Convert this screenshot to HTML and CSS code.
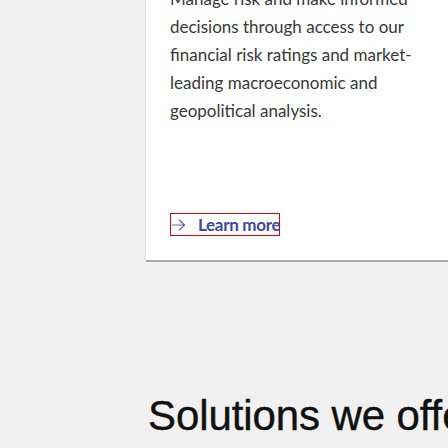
FILE: index.html
```html
<!DOCTYPE html>
<html>
<head>
<meta charset="utf-8">
<link rel="stylesheet" href="styles.css">
</head>
<body>
<div class="page">
  <div class="card">
    <p class="desc">Manage risk and make informed decisions through access to our financial risk ratings and market-leading macroeconomic and geopolitical analysis.</p>
    <a class="learn" href="#">
      <svg class="arrow" width="14" height="12" viewBox="0 0 14 12"><path d="M0 6H12.5M7 0.8L12.5 6L7 11.2" fill="none" stroke="#5a68b8" stroke-width="1.2"/></svg>
      <span class="label">Learn more</span>
    </a>
  </div>
  <h2 class="title">Solutions we offer</h2>
</div>
</body>
</html>
```
FILE: styles.css
```css
html, body {
  margin: 0;
  padding: 0;
  background: #f1f1f1;
  overflow: hidden;
}
.page {
  width: 448px;
  height: 448px;
  overflow: hidden;
}
.card {
  margin: -15px 0 0 146px;
  width: 360px;
  background: #fff;
  padding: 0 0 24px 24px;
  box-shadow: 0 2px 0 #a9a9a9, -1px 0 0 #e2e2e2;
  box-sizing: border-box;
}
.desc {
  margin: 0;
  width: 250px;
  font-family: Lato, "Noto Sans", sans-serif;
  font-size: 17px;
  line-height: 28px;
  color: #383838;
}
.learn {
  display: flex;
  align-items: center;
  margin-top: 88px;
  width: 108px;
  height: 21px;
  border: 1px solid #e3000f;
  text-decoration: none;
  overflow: visible;
  white-space: nowrap;
}
.arrow {
  margin-left: 1px;
  flex: none;
}
.label {
  margin-left: 12px;
  font-family: Lato, "Noto Sans", sans-serif;
  font-weight: 700;
  font-size: 17px;
  letter-spacing: -0.3px;
  color: #3b4aa3;
}
.title {
  margin: 130px 0 0 148px;
  font-family: "Liberation Sans", Arial, sans-serif;
  font-weight: 400;
  font-size: 42px;
  letter-spacing: -0.1px;
  line-height: 52px;
  color: #111;
  white-space: nowrap;
  -webkit-text-stroke: 0.4px #111;
}
```
